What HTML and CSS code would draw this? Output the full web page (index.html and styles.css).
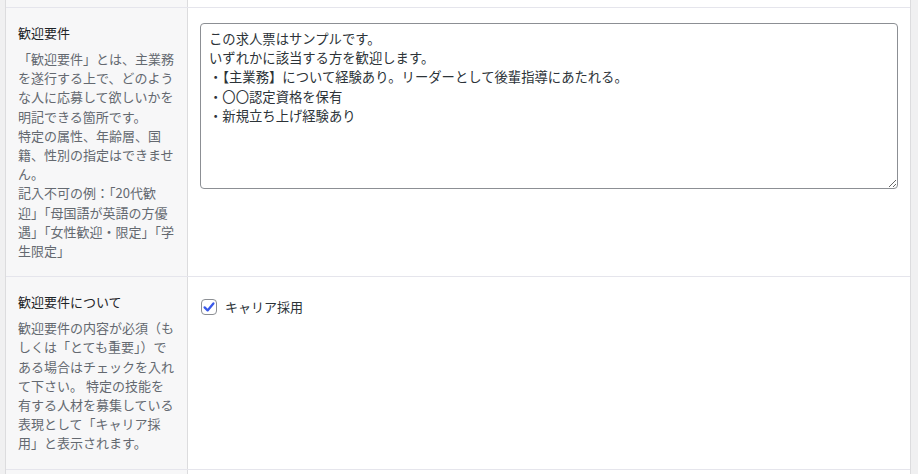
FILE: index.html
```html
<!DOCTYPE html>
<html lang="ja">
<head>
  <meta charset="UTF-8">
  <meta name="viewport" content="width=device-width, initial-scale=1.0">
  <title>求人票</title>
  <link rel="stylesheet" href="styles.css">
</head>
<body>
  <div class="wrap">
    <div class="form-row stub">
      <div class="label-cell"></div>
      <div class="field-cell"></div>
    </div>

    <div class="form-row">
      <div class="label-cell">
        <p class="label-title">歓迎要件</p>
        <p class="label-desc">「歓迎要件」とは、主業務を遂行する上で、どのような人に応募して欲しいかを明記できる箇所です。<br>特定の属性、年齢層、国籍、性別の指定はできません。<br>記入不可の例：「20代歓迎」「母国語が英語の方優遇」「女性歓迎・限定」「学生限定」</p>
      </div>
      <div class="field-cell">
        <textarea class="field-text" readonly>この求人票はサンプルです。
いずれかに該当する方を歓迎します。
・【主業務】について経験あり。リーダーとして後輩指導にあたれる。
・〇〇認定資格を保有
・新規立ち上げ経験あり</textarea>
      </div>
    </div>

    <div class="form-row">
      <div class="label-cell">
        <p class="label-title">歓迎要件について</p>
        <p class="label-desc">歓迎要件の内容が必須（もしくは「とても重要」）である場合はチェックを入れて下さい。 特定の技能を有する人材を募集している表現として「キャリア採用」と表示されます。</p>
      </div>
      <div class="field-cell">
        <label class="check">
          <span class="check-box">
            <svg width="14" height="14" viewBox="0 0 14 14">
              <path d="M2.6 7.4 L5.6 10.4 L11.4 3.4" fill="none" stroke="#3858e9" stroke-width="2.3" stroke-linecap="round" stroke-linejoin="round"/>
            </svg>
          </span>
          キャリア採用
        </label>
      </div>
    </div>

    <div class="form-row stub">
      <div class="label-cell"></div>
      <div class="field-cell"></div>
    </div>
  </div>
</body>
</html>
```

FILE: styles.css
```css
body {
  margin: 0;
  background: #f0f0f1;
  font-family: "Noto Sans CJK JP", "Noto Sans", sans-serif;
  font-size: 13px;
  color: #2c3338;
  overflow: hidden;
}
.wrap {
  margin: 0 7px 0 5px;
  border-left: 1px solid #dcdcde;
  border-right: 1px solid #dcdcde;
  background: #fff;
}
.form-row {
  display: grid;
  grid-template-columns: 182px 1fr;
  border-bottom: 1px solid #e5e5ec;
}
.stub { height: 7px; }
.label-cell {
  background: #f7f7f8;
  border-right: 1px solid #dcdcde;
  padding: 15px 12px 16px;
}
.stub .label-cell,
.stub .field-cell { padding: 0; }
.field-cell {
  padding: 15px 12px 15px 12px;
}
.label-title {
  margin: 0 0 7px;
  line-height: 19px;
  color: #1d2327;
}
.label-desc {
  margin: 0;
  line-height: 19.2px;
  color: #646970;
}
.field-text {
  display: block;
  box-sizing: border-box;
  width: 100%;
  height: 166px;
  margin: 0;
  padding: 5px 8px;
  border: 1px solid #8c8f94;
  border-radius: 4px;
  font-family: "Noto Sans CJK JP", "Noto Sans", sans-serif;
  font-size: 13.333px;
  line-height: 19.2px;
  color: #2c3338;
  background: #fff;
  outline: none;
}
.check {
  display: flex;
  align-items: center;
  gap: 8px;
  margin-top: 7px;
  margin-left: 1px;
  line-height: 16px;
  color: #2c3338;
}
.check-box {
  box-sizing: border-box;
  width: 16px;
  height: 16px;
  border: 1px solid #8c8f94;
  border-radius: 4px;
  background: #fff;
  display: flex;
  align-items: center;
  justify-content: center;
}
```
